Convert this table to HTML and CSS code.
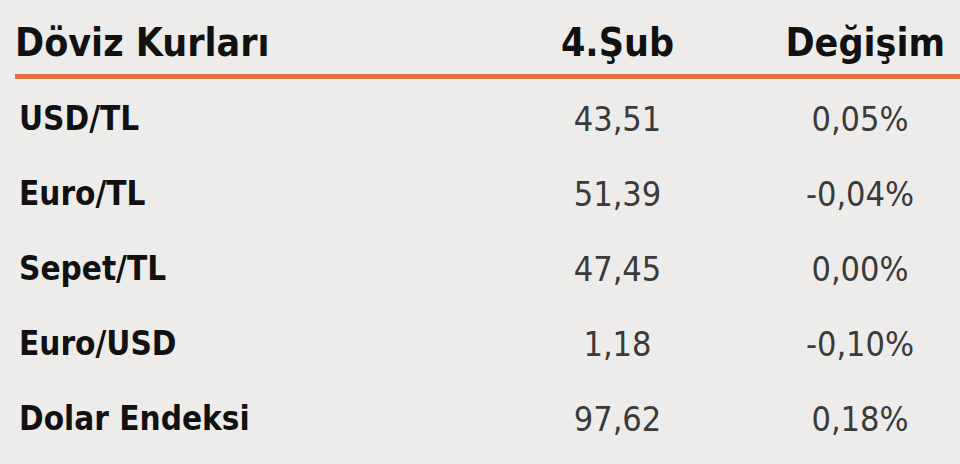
FILE: index.html
```html
<!DOCTYPE html>
<html lang="tr">
<head>
<meta charset="utf-8">
<link rel="stylesheet" href="styles.css">
</head>
<body>
<div class="table">
  <div class="row head">
    <div class="c1">Döviz Kurları</div>
    <div class="c2">4.Şub</div>
    <div class="c3">Değişim</div>
  </div>
  <div class="row">
    <div class="c1">USD/TL</div>
    <div class="c2">43,51</div>
    <div class="c3">0,05%</div>
  </div>
  <div class="row">
    <div class="c1">Euro/TL</div>
    <div class="c2">51,39</div>
    <div class="c3">-0,04%</div>
  </div>
  <div class="row">
    <div class="c1">Sepet/TL</div>
    <div class="c2">47,45</div>
    <div class="c3">0,00%</div>
  </div>
  <div class="row">
    <div class="c1">Euro/USD</div>
    <div class="c2">1,18</div>
    <div class="c3">-0,10%</div>
  </div>
  <div class="row">
    <div class="c1">Dolar Endeksi</div>
    <div class="c2">97,62</div>
    <div class="c3">0,18%</div>
  </div>
</div>
</body>
</html>
```
FILE: styles.css
```css
html, body {
  margin: 0;
  padding: 0;
  background: #edeceb;
  width: 960px;
  height: 464px;
  overflow: hidden;
}
.table {
  padding-left: 15px;
  font-family: "DejaVu Sans Condensed", "DejaVu Sans", sans-serif;
}
.row {
  display: grid;
  grid-template-columns: 505px 195px 1fr;
  align-items: center;
  height: 75px;
  font-size: 34px;
}
.row .c1 {
  font-weight: bold;
  font-size: 33px;
  color: #111;
  padding-left: 4px;
}
.row .c2, .row .c3 {
  text-align: center;
  color: #3a3a3a;
}
.row .c3 {
  padding-left: 45px;
}
.row.head {
  height: 79px;
  border-bottom: 5px solid #e0733f;
  font-size: 39px;
  font-weight: bold;
  margin-bottom: 2px;
  box-sizing: border-box;
  align-items: end;
  padding-bottom: 9px;
}
.row.head div {
  color: #111;
  font-weight: bold;
  font-size: 39px;
}
.row.head .c1 { padding-left: 0; }
.row.head .c3 { text-align: right; padding-right: 15px; padding-left: 0; }
```
